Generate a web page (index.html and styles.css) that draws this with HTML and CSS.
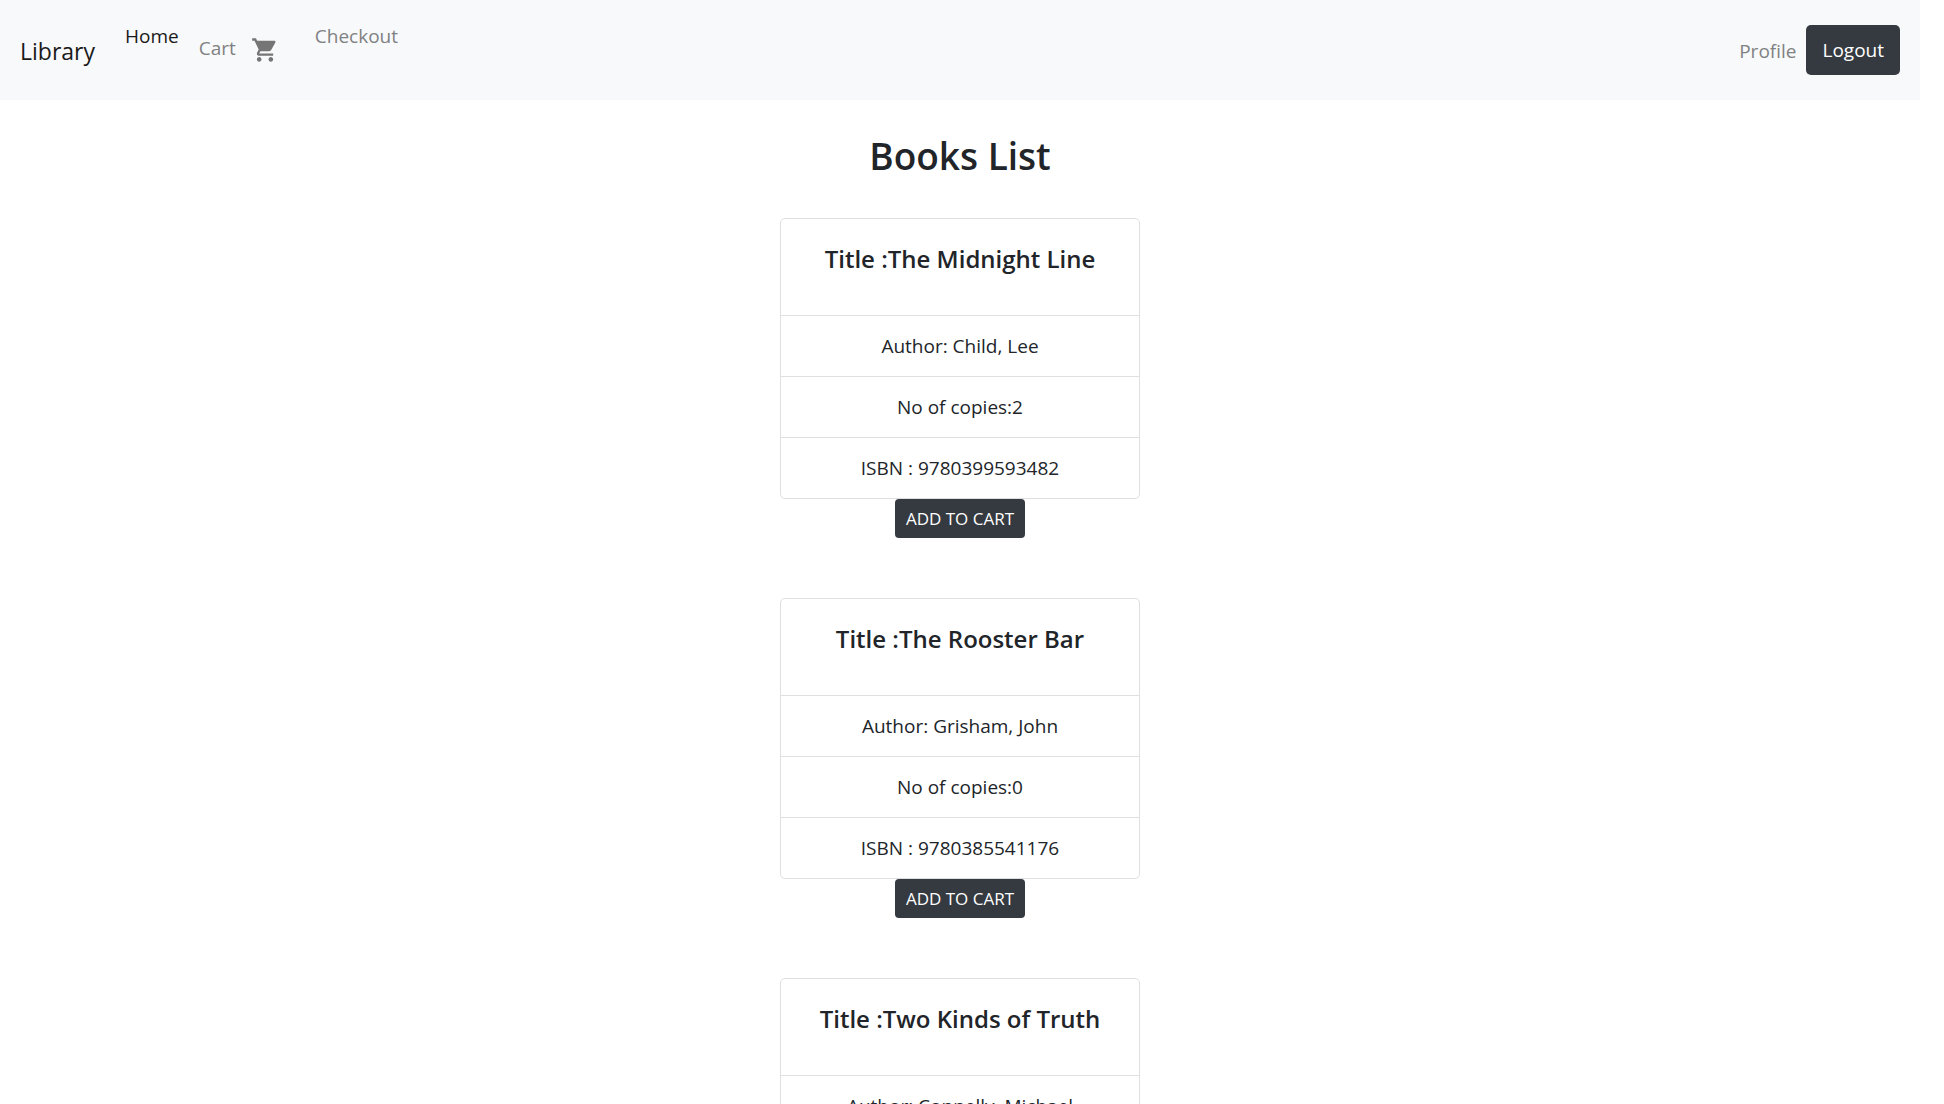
FILE: index.html
```html
<!DOCTYPE html>
<html lang="en">
<head>
  <meta charset="utf-8">
  <meta name="viewport" content="width=device-width, initial-scale=1">
  <title>Library</title>
  <link rel="stylesheet" href="styles.css">
</head>
<body>
  <header class="navbar">
    <a class="brand" href="#">Library</a>
    <nav class="nav-main">
      <a class="nav-link active" href="#">Home</a>
      <a class="nav-link cart-link" href="#">
        <span class="cart-label">Cart</span>
        <svg class="cart-icon" viewBox="0 0 24 24" aria-hidden="true"><path d="M7 18c-1.1 0-1.99.9-1.99 2S5.900 22 7 22s2-.9 2-2-.9-2-2-2zM1 2v2h2l3.600 7.590-1.350 2.450c-.16.280-.25.610-.25.960 0 1.100.9 2 2 2h12v-2H7.420c-.14 0-.25-.11-.25-.25l.03-.12.9-1.630h7.450c.75 0 1.410-.41 1.750-1.030l3.580-6.490c.08-.14.12-.31.12-.48 0-.55-.45-1-1-1H5.210l-.94-2H1zm16 16c-1.100 0-1.990.9-1.990 2s.89 2 1.990 2 2-.9 2-2-.9-2-2-2z"/></svg>
      </a>
      <a class="nav-link" href="#">Checkout</a>
    </nav>
    <div class="nav-user">
      <a class="nav-link" href="#">Profile</a>
      <button class="btn" type="button">Logout</button>
    </div>
  </header>

  <main class="page">
    <h1 class="page-title">Books List</h1>

    <article class="book">
      <div class="card">
        <h2 class="card-title">Title :The Midnight Line</h2>
        <ul class="card-rows">
          <li>Author: Child, Lee</li>
          <li>No of copies:2</li>
          <li>ISBN : 9780399593482</li>
        </ul>
      </div>
      <button class="btn btn-small" type="button">ADD TO CART</button>
    </article>

    <article class="book">
      <div class="card">
        <h2 class="card-title">Title :The Rooster Bar</h2>
        <ul class="card-rows">
          <li>Author: Grisham, John</li>
          <li>No of copies:0</li>
          <li>ISBN : 9780385541176</li>
        </ul>
      </div>
      <button class="btn btn-small" type="button">ADD TO CART</button>
    </article>

    <article class="book">
      <div class="card">
        <h2 class="card-title">Title :Two Kinds of Truth</h2>
        <ul class="card-rows">
          <li>Author: Connelly, Michael</li>
        </ul>
      </div>
    </article>
  </main>
</body>
</html>
```

FILE: styles.css
```css
* {
  box-sizing: border-box;
}

html {
  height: 100%;
  overflow: hidden;
}

body {
  margin: 0 24px 0 0;
  background: #fff;
  color: #212529;
  font-family: "Segoe UI", "Open Sans", "Noto Sans", sans-serif;
  font-size: 19px;
  line-height: 30px;
}

a {
  text-decoration: none;
}

.navbar {
  display: flex;
  align-items: center;
  padding: 10px 20px;
  background: #f8f9fb;
}

.brand {
  margin-right: 20px;
  padding-top: 2px;
  color: #1a1a1a;
  font-size: 23px;
  line-height: 38px;
}

.nav-main {
  display: flex;
  align-items: flex-start;
  flex: 1;
}

.nav-link {
  padding: 11px 10px 9px;
  color: #808182;
}

.nav-link.active {
  color: #1a1a1a;
}

.cart-link {
  display: flex;
  align-items: center;
  padding: 10px;
}

.cart-label {
  padding-bottom: 4px;
}

.cart-icon {
  box-sizing: content-box;
  width: 28px;
  height: 28px;
  padding: 16px 16px 16px 15px;
  fill: #757575;
}

.nav-user {
  display: flex;
  align-items: center;
}

.btn {
  padding: 10px 16px;
  border: 0;
  border-radius: 5px;
  background: #343a40;
  color: #fff;
  font: inherit;
  cursor: pointer;
}

.btn-small {
  padding: 6px 11px;
  border-radius: 4px;
  font-size: 17px;
  line-height: 27px;
}

.page {
  display: flex;
  flex-direction: column;
  align-items: center;
  padding-top: 32px;
  text-align: center;
}

.page-title {
  margin: 0 0 38px;
  font-size: 37px;
  font-weight: 600;
  line-height: 48px;
}

.book {
  display: flex;
  flex-direction: column;
  align-items: center;
  width: 360px;
  max-width: 100%;
  margin-bottom: 60px;
}

.card {
  width: 100%;
  border: 1px solid #dfdfdf;
  border-radius: 5px;
}

.card-title {
  margin: 0;
  padding: 25px 20px 41px;
  font-size: 24px;
  font-weight: 600;
  line-height: 30px;
}

.card-rows {
  margin: 0;
  padding: 0;
  list-style: none;
}

.card-rows li {
  padding: 15px 20px;
  border-top: 1px solid #dfdfdf;
}
```
